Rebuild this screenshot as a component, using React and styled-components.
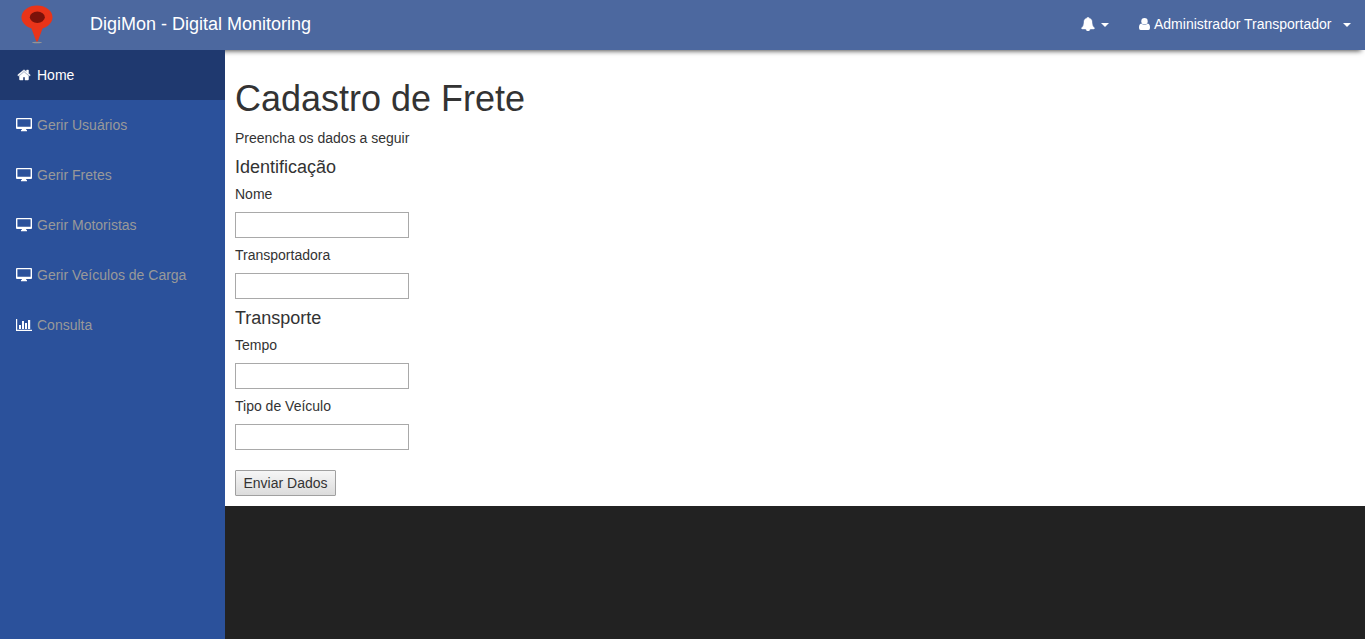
import React from "react";
import styled, { createGlobalStyle } from "styled-components";

const GlobalStyle = createGlobalStyle`
  *, *::before, *::after { box-sizing: border-box; }
  body {
    margin: 0;
    background: #222;
    color: #333;
    font-family: "Liberation Sans", Arial, sans-serif;
    font-size: 14px;
    line-height: 20px;
  }
`;

const Shell = styled.div`
  display: flex;
  flex-direction: column;
  min-height: 100vh;
`;

const Header = styled.header`
  display: flex;
  align-items: center;
  position: relative;
  z-index: 1;
  height: 50px;
  background: #4c689f;
  box-shadow: 0 5px 5px -4px rgba(0, 0, 0, 0.7);
`;

const Brand = styled.a`
  display: flex;
  align-items: center;
  height: 50px;
  padding: 0 20px;
  gap: 35px;
  color: #fff;
  font-size: 18px;
  text-decoration: none;
`;

const BrandName = styled.span`
  padding-bottom: 3px;
`;

const UserNav = styled.nav`
  display: flex;
  margin-left: auto;
`;

const NavButton = styled.button`
  display: flex;
  align-items: center;
  height: 50px;
  padding: 0 14px 2px 16px;
  border: 0;
  background: none;
  color: #fff;
  font: inherit;
  cursor: pointer;
`;

const ButtonText = styled.span`
  min-width: 183px;
  margin-left: 4px;
  text-align: left;
`;

const Caret = styled.span`
  margin: 2px 0 0 6px;
  border-top: 4px solid #fff;
  border-left: 4px solid transparent;
  border-right: 4px solid transparent;
`;

const Body = styled.div`
  display: flex;
  flex: 1;
  align-items: stretch;
`;

const Sidebar = styled.nav`
  position: relative;
  z-index: 2;
  flex: 0 0 225px;
  background: #2b519b;
`;

const Menu = styled.ul`
  margin: 0;
  padding: 0;
  list-style: none;
`;

const MenuLink = styled.a`
  display: flex;
  align-items: center;
  gap: 4px;
  height: 50px;
  padding: 0 15px;
  background: ${(p) => (p.$active ? "#1f396f" : "transparent")};
  color: ${(p) => (p.$active ? "#fff" : "#999")};
  text-decoration: none;
`;

const IconSlot = styled.span`
  display: flex;
  justify-content: center;
  width: 18px;
  color: #fff;
`;

const Content = styled.main`
  flex: 1;
  align-self: flex-start;
  padding: 29px 10px 10px;
  background: #fff;
`;

const Title = styled.h1`
  margin: 0 0 9px;
  font-size: 36px;
  font-weight: 400;
  line-height: 40px;
`;

const Intro = styled.p`
  margin: 0 0 9px;
`;

const Section = styled.fieldset`
  margin: 0 0 9px;
  padding: 0;
  border: 0;
`;

const SectionTitle = styled.legend`
  margin-bottom: 7px;
  padding: 0;
  font-size: 18px;
`;

const Fields = styled.div`
  display: flex;
  flex-direction: column;
  gap: 7px;
`;

const Field = styled.div`
  display: flex;
  flex-direction: column;
  align-items: flex-start;
  gap: 8px;
`;

const TextInput = styled.input`
  width: 174px;
  height: 26px;
  padding: 2px;
  border: 1px solid #a9a9a9;
  border-radius: 0;
  background: #fff;
  color: #333;
  font: inherit;
`;

const Submit = styled.button`
  display: block;
  min-width: 101px;
  height: 26px;
  margin-top: 20px;
  padding: 0 7px;
  border: 1px solid #a0a0a0;
  border-radius: 1px;
  background: linear-gradient(#f6f6f6, #dcdcdc);
  color: #333;
  font: inherit;
  cursor: pointer;
`;

const PinLogo = () => (
  <svg width="35" height="44" viewBox="0 0 35 44" aria-hidden="true">
    <ellipse cx="17" cy="39.500" rx="5" ry="0.800" fill="#929496" />
    <path d="M10.500 23H23.500L17.700 38.500H16.300Z" fill="#e93419" />
    <ellipse cx="17" cy="14.300" rx="15.500" ry="11.800" fill="#e93419" />
    <ellipse cx="17.300" cy="14.300" rx="7.500" ry="5.700" fill="#7b120a" />
  </svg>
);

const HomeIcon = () => (
  <svg width="14" height="14" viewBox="0 0 1792 1792" fill="currentColor" stroke="currentColor" strokeWidth="60" aria-hidden="true">
    <path d="M1472 992v480q0 26-19 45t-45 19h-384v-384h-256v384h-384q-26 0-45-19t-19-45v-480q0-1 .5-3t.5-3l575-474 575 474q1 2 1 6zm223-69l-62 74q-8 9-21 11h-3q-13 0-21-7l-692-577-692 577q-12 8-24 7-13-2-21-11l-62-74q-8-10-7-23.500t11-21.500l719-599q32-26 76-26t76 26l244 204v-195q0-14 9-23t23-9h192q14 0 23 9t9 23v408l219 182q10 8 11 21.500t-7 23.500z" />
  </svg>
);

const DesktopIcon = () => (
  <svg width="16" height="14" viewBox="0 0 16 14" fill="currentColor" aria-hidden="true">
    <path fillRule="evenodd" d="M1 0H15Q16 0 16 1V10Q16 11 15 11H10Q10 12 11 12.300V13.300H5V12.300Q6 12 6 11H1Q0 11 0 10V1Q0 0 1 0ZM1.400 1.300V8.700H14.600V1.300Z" />
  </svg>
);

const ChartIcon = () => (
  <svg width="16" height="12" viewBox="0 0 16 12" fill="currentColor" aria-hidden="true">
    <path d="M0 0H1.200V10.800H16V12H0ZM3 6H5V10H3ZM6 2H8V10H6ZM9 4H11V10H9ZM12 1H14.200V10H12Z" />
  </svg>
);

const BellIcon = () => (
  <svg width="14" height="14" viewBox="0 0 1792 1792" fill="currentColor" stroke="currentColor" strokeWidth="50" aria-hidden="true">
    <path d="M1728 1408q0 52-38 90t-90 38h-448q0 106-75 181t-181 75-181-75-75-181h-448q-52 0-90-38t-38-90q50-42 91-88t85-119.500 74.500-158.500 50-206 19.500-260q0-152 117-282.500t307-158.500q-8-19-8-39 0-40 28-68t68-28 68 28 28 68q0 20-8 39 190 28 307 158.500t117 282.500q0 139 19.500 260t50 206 74.500 158.500 85 119.500 91 88z" />
  </svg>
);

const UserIcon = () => (
  <svg width="11" height="12" viewBox="0 0 11 12" fill="currentColor" aria-hidden="true">
    <circle cx="5.500" cy="3.200" r="3.200" />
    <path d="M2.200 5.600Q5.500 8.200 8.800 5.600Q11 6 11 9.800Q11 12 9.400 12H1.600Q0 12 0 9.800Q0 6 2.200 5.600Z" />
  </svg>
);

const menuItems = [
  { label: "Home", Icon: HomeIcon, active: true },
  { label: "Gerir Usuários", Icon: DesktopIcon },
  { label: "Gerir Fretes", Icon: DesktopIcon },
  { label: "Gerir Motoristas", Icon: DesktopIcon },
  { label: "Gerir Veículos de Carga", Icon: DesktopIcon },
  { label: "Consulta", Icon: ChartIcon },
];

const sections = [
  {
    title: "Identificação",
    fields: [
      { id: "nome", label: "Nome" },
      { id: "transportadora", label: "Transportadora" },
    ],
  },
  {
    title: "Transporte",
    fields: [
      { id: "tempo", label: "Tempo" },
      { id: "tipo-veiculo", label: "Tipo de Veículo" },
    ],
  },
];

export default function App() {
  return (
    <Shell>
      <GlobalStyle />
      <Header>
        <Brand href="#">
          <PinLogo />
          <BrandName>DigiMon - Digital Monitoring</BrandName>
        </Brand>
        <UserNav>
          <NavButton type="button" aria-label="Notificações">
            <BellIcon />
            <Caret />
          </NavButton>
          <NavButton type="button">
            <UserIcon />
            <ButtonText>Administrador Transportador</ButtonText>
            <Caret />
          </NavButton>
        </UserNav>
      </Header>
      <Body>
        <Sidebar>
          <Menu>
            {menuItems.map(({ label, Icon, active }) => (
              <li key={label}>
                <MenuLink href="#" $active={active}>
                  <IconSlot>
                    <Icon />
                  </IconSlot>
                  {label}
                </MenuLink>
              </li>
            ))}
          </Menu>
        </Sidebar>
        <Content>
          <Title>Cadastro de Frete</Title>
          <Intro>Preencha os dados a seguir</Intro>
          <form>
            {sections.map((section) => (
              <Section key={section.title}>
                <SectionTitle>{section.title}</SectionTitle>
                <Fields>
                  {section.fields.map((field) => (
                    <Field key={field.id}>
                      <label htmlFor={field.id}>{field.label}</label>
                      <TextInput id={field.id} type="text" />
                    </Field>
                  ))}
                </Fields>
              </Section>
            ))}
            <Submit type="submit">Enviar Dados</Submit>
          </form>
        </Content>
      </Body>
    </Shell>
  );
}
